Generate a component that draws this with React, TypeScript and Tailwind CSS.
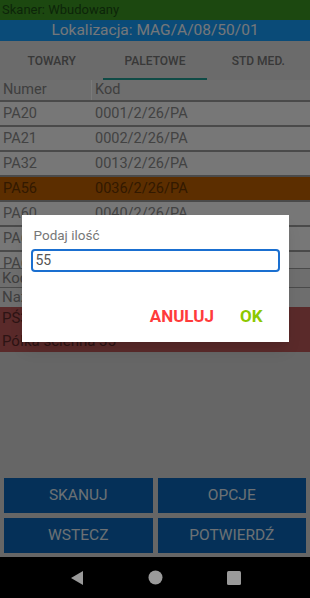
const rows = [
  { numer: "PA20", kod: "0001/2/26/PA" },
  { numer: "PA21", kod: "0002/2/26/PA" },
  { numer: "PA32", kod: "0013/2/26/PA" },
  { numer: "PA56", kod: "0036/2/26/PA", active: true },
  { numer: "PA60", kod: "0040/2/26/PA" },
  { numer: "PA61", kod: "0041/2/26/PA" },
  { numer: "PA62", kod: "0042/2/26/PA" },
];

const tabs = ["TOWARY", "PALETOWE", "STD MED."];

const App = () => {
  return (
    <div
      className="flex h-[598px] w-[310px] flex-col overflow-hidden bg-black"
      style={{ fontFamily: "Roboto, 'Liberation Sans', sans-serif" }}
    >
      <div className="relative flex h-[557px] flex-col bg-[#cccccc]">
        <div className="h-[20px] bg-[#389020] pl-[2px] text-[13px] leading-[20px] text-[#184a12]">
          Skaner: Wbudowany
        </div>
        <div className="h-[21px] bg-[#1496f0] text-center text-[15.5px] leading-[21px] text-[#e8eef4]">
          Lokalizacja: MAG/A/08/50/01
        </div>

        <div className="grid h-[39px] grid-cols-3 bg-[#d6d6d6]">
          {tabs.map((t) => (
            <div
              key={t}
              className={`flex items-center justify-center border-b-2 pt-[2px] text-[12px] font-medium text-[#707070] ${
                t === "PALETOWE" ? "border-[#1e968c]" : "border-transparent"
              }`}
            >
              {t}
            </div>
          ))}
        </div>

        <div className="h-[188px] overflow-hidden">
          <div className="flex h-[20px] bg-[#dcdcdc] text-[14.5px] leading-[20px] text-[#7e7e7e]">
            <div className="w-[92px] border-r border-[#f4f4f4] pl-[3px]">Numer</div>
            <div className="pl-[3px]">Kod</div>
          </div>
          {rows.map((r) => (
            <div
              key={r.numer}
              className={`flex h-[25px] border-t-2 border-[#949494] text-[14.5px] leading-[23px] ${
                r.active ? "bg-[#b85c00] text-[#643200]" : "bg-[#eeeeee] text-[#858585]"
              }`}
            >
              <div className="w-[92px] pl-[3px]">{r.numer}</div>
              <div className="pl-[3px]">{r.kod}</div>
            </div>
          ))}
        </div>

        <div className="h-[19px] border-t border-[#949494] bg-[#dcdcdc] pl-[2px] text-[15px] leading-[19px] text-[#7e7e7e]">
          Kod: 0036/2/26/PA
        </div>
        <div className="h-[20px] border-t border-[#949494] bg-[#dcdcdc] pl-[2px] text-[15px] leading-[19px] text-[#7e7e7e]">
          Nazwa: Paleta
        </div>
        <div className="flex h-[45px] flex-col bg-[#b45454] pl-[2px] text-[15px] text-[#5a2828]">
          <div className="h-[23px] leading-[23px]">PŚ35</div>
          <div className="h-[22px] leading-[22px]">Półka ścienna 35</div>
        </div>

        <div className="flex-1" />

        <div className="grid grid-cols-2 gap-x-[5px] gap-y-[5px] px-[4px] pb-[4px]">
          {["SKANUJ", "OPCJE", "WSTECZ", "POTWIERDŹ"].map((b) => (
            <button
              key={b}
              className="h-[35px] bg-[#0a60b0] text-[15.5px] font-normal text-[#d8e0e8]"
            >
              {b}
            </button>
          ))}
        </div>

        <div className="absolute inset-0 flex items-center justify-center bg-black/50">
          <div className="flex h-[127px] w-[267px] flex-col bg-white px-[9px] pt-[10px] shadow-lg">
            <div className="pl-[3px] text-[13.5px] leading-[20px] text-[#777777]">
              Podaj ilość
            </div>
            <div className="mt-[4px] h-[23px] rounded-[4px] border-2 border-[#1a6fd0] pl-[3px] text-[14px] leading-[19px] text-[#555555]">
              55
            </div>
            <div className="mt-[34px] flex justify-end gap-[26px] pr-[17px] text-[17px] font-bold leading-[21px]">
              <span className="text-[#ff3b3b]">ANULUJ</span>
              <span className="text-[#8cc800]">OK</span>
            </div>
          </div>
        </div>
      </div>

      <div className="flex h-[41px] items-center justify-center gap-[64px] bg-black">
        <svg width="14" height="16" viewBox="0 0 14 16">
          <path d="M13 1 L1 8 L13 15 Z" fill="#9a9a9a" />
        </svg>
        <svg width="15" height="15" viewBox="0 0 15 15">
          <circle cx="7.5" cy="7.5" r="7" fill="#9a9a9a" />
        </svg>
        <svg width="14" height="14" viewBox="0 0 14 14">
          <rect x="0" y="0" width="14" height="14" rx="1.5" fill="#9a9a9a" />
        </svg>
      </div>
    </div>
  );
};

export default App;
